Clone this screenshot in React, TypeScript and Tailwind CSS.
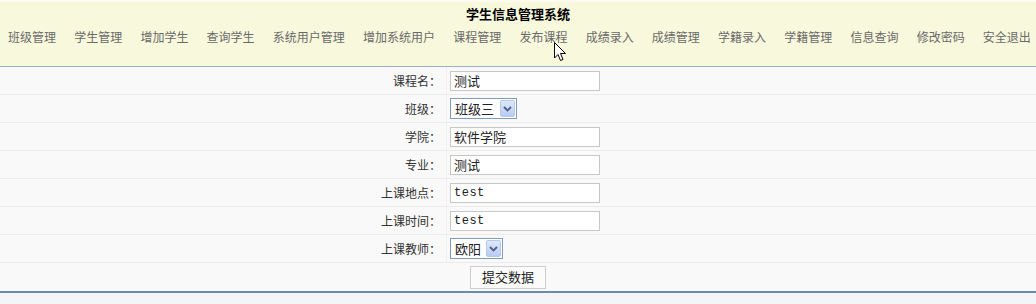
import React from "react";

const nav = ["班级管理","学生管理","增加学生","查询学生","系统用户管理","增加系统用户","课程管理","发布课程","成绩录入","成绩管理","学籍录入","学籍管理","信息查询","修改密码","安全退出"];

function Select({ value, w }: { value: string; w: string }) {
  return (
    <div className={`flex h-[21px] ${w} items-center border border-[#7f9db9] bg-white pl-[4px] pr-[1px]`}>
      <span className="flex-1 text-[13px] text-[#222]">{value}</span>
      <div className="flex h-[17px] w-[15px] items-center justify-center rounded-[2px] border border-[#b7c8e8] bg-gradient-to-b from-[#dfe8fb] to-[#b8cbf3]">
        <svg width="9" height="6" viewBox="0 0 9 6"><path d="M1 1 L4.5 4.5 L8 1" stroke="#4d6185" strokeWidth="1.8" fill="none" /></svg>
      </div>
    </div>
  );
}

function Input({ value, mono }: { value: string; mono?: boolean }) {
  return (
    <div className={`flex h-[20px] w-[150px] items-center border border-[#c8c8c8] bg-white px-[3px] ${mono ? "font-['Liberation_Mono',monospace] text-[12px] tracking-[0.5px]" : "text-[13px]"} text-[#222]`}>
      {value}
    </div>
  );
}

export default function App() {
  const rows: [string, React.ReactNode][] = [
    ["课程名：", <Input value="测试" />],
    ["班级：", <Select value="班级三" w="w-[67px]" />],
    ["学院：", <Input value="软件学院" />],
    ["专业：", <Input value="测试" />],
    ["上课地点：", <Input value="test" mono />],
    ["上课时间：", <Input value="test" mono />],
    ["上课教师：", <Select value="欧阳" w="w-[53px]" />],
  ];
  return (
    <div className="relative h-[304px] w-[1036px] bg-[#f3f5f7] font-['Noto_Sans_CJK_SC','Noto_Sans',sans-serif]">
      <div className="h-[66px] border-t-[2px] border-[#fbfbef] bg-[#f8f8dc]">
        <div className="pt-[2px] text-center text-[13px] font-bold leading-[20px] text-black">学生信息管理系统</div>
        <div className="mt-[5px] flex justify-between pl-[8px] pr-[5px] text-[12px] leading-[16px] text-[#6a6a6a]">
          {nav.map((n) => (
            <span key={n}>{n}</span>
          ))}
        </div>
      </div>
      <div className="h-[1px] bg-[#9ab0cc]" />
      <div className="bg-[#f9f9f9]">
        {rows.map(([l, c]) => (
          <div key={l} className="grid h-[28px] grid-cols-[447px_1fr] border-b border-[#ececec]">
            <div className="flex items-center justify-end border-r border-[#efefef] pr-[5px] text-[12px] text-[#333]">{l}</div>
            <div className="flex items-center pl-[3px]">{c}</div>
          </div>
        ))}
        <div className="flex h-[28px] items-center justify-center">
          <div className="ml-[-20px] flex h-[23px] w-[76px] items-center justify-center border border-[#cfcfcf] bg-[#fbfbfb] text-[13px] text-[#222]">提交数据</div>
        </div>
      </div>
      <div className="h-[2px] bg-[#6a8ab0]" />
      <svg className="absolute left-[554px] top-[42px]" width="13" height="20" viewBox="0 0 13 20">
        <path d="M0.5 0.5 L0.5 16 L4 12.5 L6.5 18.5 L9 17.5 L6.5 11.5 L11.5 11.5 Z" fill="white" stroke="black" strokeWidth="1" />
      </svg>
    </div>
  );
}
